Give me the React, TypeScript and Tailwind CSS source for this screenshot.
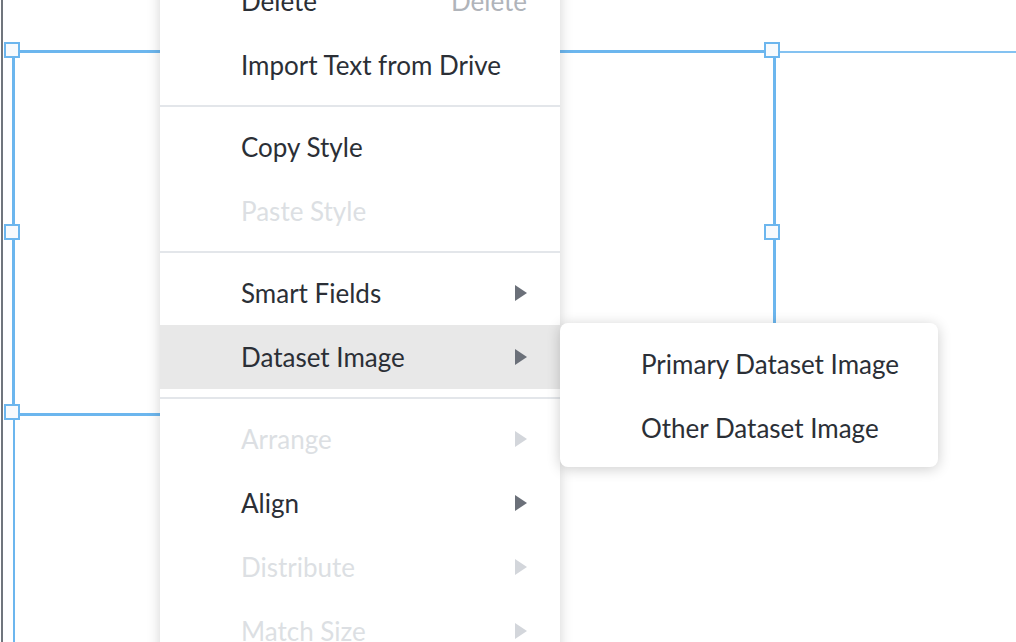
import React from "react";

type Item =
  | { kind: "item"; label: string; disabled?: boolean; sub?: boolean; shortcut?: string; active?: boolean }
  | { kind: "sep" };

const items: Item[] = [
  { kind: "item", label: "Delete", shortcut: "Delete" },
  { kind: "item", label: "Import Text from Drive" },
  { kind: "sep" },
  { kind: "item", label: "Copy Style" },
  { kind: "item", label: "Paste Style", disabled: true },
  { kind: "sep" },
  { kind: "item", label: "Smart Fields", sub: true },
  { kind: "item", label: "Dataset Image", sub: true, active: true },
  { kind: "sep" },
  { kind: "item", label: "Arrange", sub: true, disabled: true },
  { kind: "item", label: "Align", sub: true },
  { kind: "item", label: "Distribute", sub: true, disabled: true },
  { kind: "item", label: "Match Size", sub: true, disabled: true },
];

function Arrow({ disabled }: { disabled?: boolean }) {
  return (
    <svg width="12" height="16" viewBox="0 0 12 16" className={disabled ? "fill-[#d3d6db]" : "fill-[#6b7079]"}>
      <path d="M0 0 L12 8 L0 16 Z" />
    </svg>
  );
}

function Handle({ className }: { className: string }) {
  return <div className={`absolute w-4 h-4 bg-[#f7fafd] border-2 border-[#6cb6ee] ${className}`} />;
}

export default function App() {
  return (
    <div className="relative w-[1016px] h-[642px] overflow-hidden bg-white font-['Lato','Noto_Sans',sans-serif]">
      {/* canvas: selected frame with guides */}
      <div className="absolute left-[1px] top-0 w-[2px] h-full bg-[#70757d]" />
      <div className="absolute left-[776px] top-[51px] right-0 h-[2px] bg-[#84c2f1]" />
      <div className="absolute left-[13px] top-[416px] bottom-0 w-[2px] bg-[#6cb6ee]" />
      <div className="absolute left-[12px] top-[50px] w-[764px] h-[366px] border-[3px] border-[#6cb6ee]" />
      <Handle className="left-[4px] top-[42px]" />
      <Handle className="left-[4px] top-[224px]" />
      <Handle className="left-[4px] top-[404px]" />
      <Handle className="left-[764px] top-[42px]" />
      <Handle className="left-[764px] top-[224px]" />

      {/* context menu */}
      <div className="absolute left-[160px] top-[-39px] w-[400px] bg-white py-2 shadow-[0_0_12px_rgba(0,0,0,0.18)]">
        {items.map((it, i) =>
          it.kind === "sep" ? (
            <div key={i} className="my-2 h-[2px] bg-[#e3e6ea]" />
          ) : (
            <div
              key={i}
              className={`flex items-center h-16 pl-[81px] pr-[33px] text-[26px] ${
                it.active ? "bg-[#e8e8e8]" : ""
              } ${it.disabled ? "text-[#dcdfe3]" : "text-[#2b2f36]"}`}
            >
              <span className="flex-1">{it.label}</span>
              {it.shortcut && <span className="text-[#b0b4ba]">{it.shortcut}</span>}
              {it.sub && <Arrow disabled={it.disabled} />}
            </div>
          )
        )}
      </div>

      {/* submenu */}
      <div className="absolute left-[560px] top-[323px] w-[378px] rounded-lg bg-white pt-[9px] pb-[7px] shadow-[0_2px_14px_rgba(0,0,0,0.2)]">
        <div className="flex items-center h-16 pl-[81px] text-[26px] text-[#2b2f36]">Primary Dataset Image</div>
        <div className="flex items-center h-16 pl-[81px] text-[26px] text-[#2b2f36]">Other Dataset Image</div>
      </div>
    </div>
  );
}
